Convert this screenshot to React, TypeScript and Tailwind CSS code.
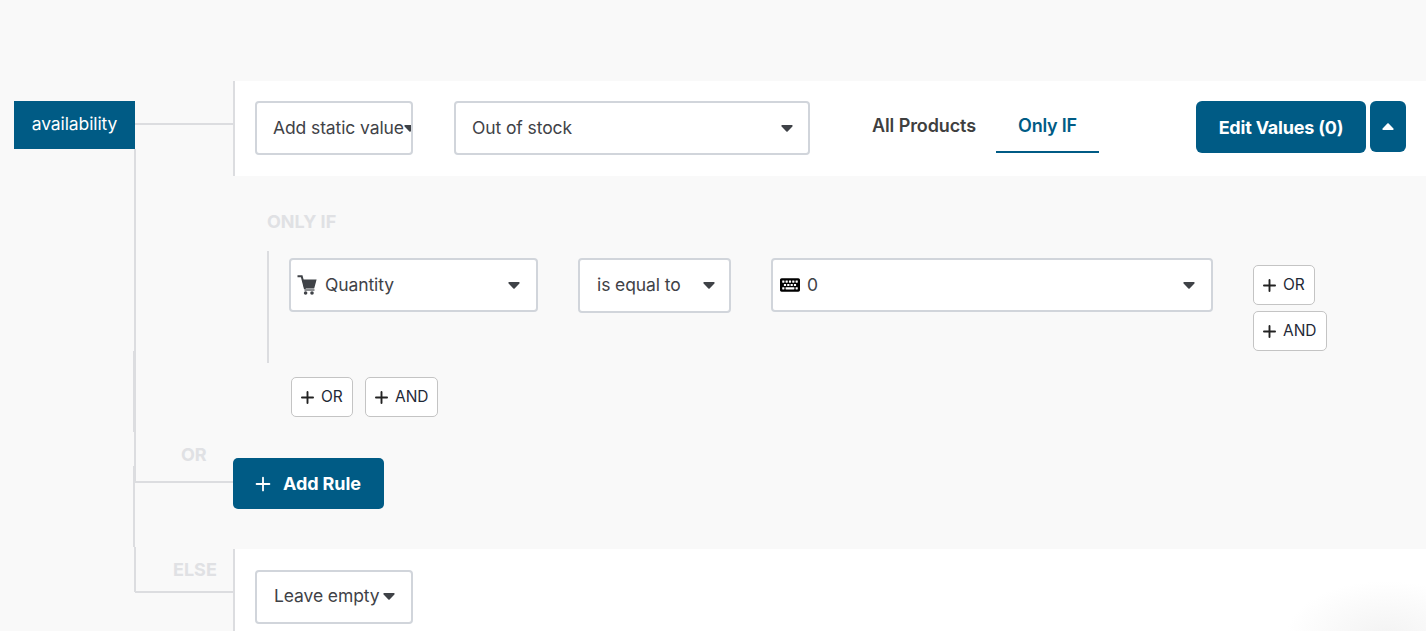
import React from 'react';
import { Plus } from 'lucide-react';
import { FaKeyboard } from 'react-icons/fa';

const Caret: React.FC<{ className?: string; up?: boolean }> = ({ className = '', up }) => (
  <svg viewBox="0 0 13 8" className={`w-[12px] h-[7px] shrink-0 ${up ? 'rotate-180' : ''} ${className}`} fill="currentColor">
    <path d="M1 0h11c.9 0 1.3 1 .7 1.6L7.2 7.4c-.4.4-1 .4-1.4 0L.3 1.6C-.3 1 .1 0 1 0z" />
  </svg>
);

const CartIcon = () => (
  <svg viewBox="0 0 20 20" className="w-[20px] h-[20px] shrink-0 mr-[8px] text-[#3f4247]" fill="currentColor">
    <path d="M0.5 1.2h4.2L8 14" fill="none" stroke="currentColor" strokeWidth="2" />
    <path d="M5.2 4.6h14.4L17.2 13.4H7.2z" />
    <path d="M7.5 15h10" stroke="currentColor" strokeWidth="1.2" />
    <circle cx="8.6" cy="18" r="1.8" />
    <circle cx="15" cy="18" r="1.8" />
  </svg>
);

const Select: React.FC<{ className: string; children: React.ReactNode }> = ({ className, children }) => (
  <div className={`flex items-center bg-white border-2 border-[#d1d5db] rounded-[4px] text-[#3f4247] text-[17.5px] font-['Inter',sans-serif] tracking-[-0.1px] ${className}`}>
    {children}
  </div>
);

const SmallBtn: React.FC<{ label: string; className: string }> = ({ label, className }) => (
  <button className={`flex items-center h-[40px] pl-[6px] bg-white border border-[#c4c4c4] rounded-[5px] text-[#1f2937] text-[15.5px] font-['Inter',sans-serif] ${className}`}>
    <Plus className="w-[19px] h-[19px] mr-[4px] text-[#222]" strokeWidth={2.4} />
    {label}
  </button>
);

const SideLabel: React.FC<{ className: string; children: React.ReactNode }> = ({ className, children }) => (
  <span className={`absolute text-[#e0e1e4] text-[18px] leading-[20px] font-bold font-['Inter',sans-serif] ${className}`}>{children}</span>
);

export default function App() {
  return (
    <div className="relative flex w-[1426px] h-[631px] overflow-hidden bg-[#f9f9f9] font-['Inter',sans-serif]">
      {/* left tree */}
      <div className="w-[233px] shrink-0 pt-[101px] pl-[14px]">
        <div className="flex items-center justify-center w-[121px] h-[48px] pb-[2px] bg-[#005b85] text-white text-[17.5px] tracking-[-0.1px]">
          availability
        </div>
      </div>
      {/* connector lines, the trunk is one pixel off in places */}
      <div className="absolute left-[135px] top-[123px] w-[98px] h-[2px] bg-[#dcdde0]" />
      <div className="absolute left-[134px] top-[149px] w-[2px] h-[334px] bg-[#dcdde0]" />
      <div className="absolute left-[133px] top-[351px] w-[1px] h-[81px] bg-[#dcdde0]" />
      <div className="absolute left-[133px] top-[466px] w-[2px] h-[81px] bg-[#dcdde0]" />
      <div className="absolute left-[134px] top-[547px] w-[2px] h-[45px] bg-[#dcdde0]" />
      <div className="absolute left-[135px] top-[481px] w-[98px] h-[2px] bg-[#dcdde0]" />
      <div className="absolute left-[135px] top-[591px] w-[98px] h-[2px] bg-[#dcdde0]" />
      <SideLabel className="left-[181px] top-[445px]">OR</SideLabel>
      <SideLabel className="left-[173px] top-[560px]">ELSE</SideLabel>

      {/* right column */}
      <div className="flex-1 pt-[81px]">
        <div className="flex items-start h-[95px] pt-[20px] pl-[20px] bg-white border-l-2 border-[#dcdde0]">
          <Select className="w-[158px] h-[54px] pl-[16px] pt-[1px] overflow-hidden">
            <span className="whitespace-nowrap">Add static value</span>
            <Caret className="text-[#3f4247] mt-[-1px]" />
          </Select>
          <Select className="w-[356px] h-[54px] ml-[41px] pl-[16px] pr-[15px] pt-[1px] justify-between">
            <span>Out of stock</span>
            <Caret />
          </Select>
          <div className="flex ml-[62px] h-[52px] text-[18px] font-semibold">
            <span className="pt-[11px] w-[124px] text-[#3f3f3f] tracking-[-0.1px]">All Products</span>
            <span className="flex justify-center pt-[11px] w-[103px] border-b-2 border-[#005b85] text-[#005b85] tracking-[-0.2px]">Only IF</span>
          </div>
          <button className="w-[170px] h-[52px] ml-[97px] pt-[1px] bg-[#005b85] rounded-[6px] text-white text-[18px] font-bold tracking-[-0.2px]">
            Edit Values (0)
          </button>
          <button className="flex items-center justify-center w-[36px] h-[51px] ml-[4px] pr-[1px] bg-[#005b85] rounded-[6px] text-white">
            <Caret up />
          </button>
        </div>

        <div className="h-[373px] pt-[36px]">
          <div className="ml-[34px] text-[#e0e1e4] text-[18px] leading-[20px] font-bold">ONLY IF</div>
          <div className="flex items-start ml-[34px] mt-[19px] h-[112px] pt-[7px] pl-[20px] border-l-2 border-[#dcdde0]">
            <Select className="w-[249px] h-[54px] pl-[6px] pr-[16px]">
              <CartIcon />
              <span className="flex-1 pt-[1px]">Quantity</span>
              <Caret />
            </Select>
            <Select className="w-[153px] h-[55px] ml-[40px] pl-[17px] pr-[14px] justify-between">
              <span>is equal to</span>
              <Caret />
            </Select>
            <Select className="w-[442px] h-[54px] ml-[40px] pl-[7px] pr-[16px]">
              <FaKeyboard className="w-[20px] h-[18px] mr-[7px] text-black" />
              <span className="flex-1 pt-[1px]">0</span>
              <Caret />
            </Select>
            <div className="flex flex-col items-start gap-[6px] ml-[40px] mt-[7px]">
              <SmallBtn label="OR" className="w-[62px]" />
              <SmallBtn label="AND" className="w-[74px]" />
            </div>
          </div>
          <div className="flex gap-[12px] ml-[58px] mt-[14px]">
            <SmallBtn label="OR" className="w-[62px]" />
            <SmallBtn label="AND" className="w-[73px]" />
          </div>
          <button className="flex items-center w-[151px] h-[51px] mt-[41px] pl-[19px] bg-[#005b85] rounded-[5px] text-white text-[18px] font-bold tracking-[-0.1px]">
            <Plus className="w-[22px] h-[22px] mr-[9px]" strokeWidth={2} />
            Add Rule
          </button>
        </div>

        <div className="h-[82px] pt-[21px] pl-[20px] bg-white border-l-2 border-[#dcdde0]">
          <Select className="w-[158px] h-[54px] pl-[17px] pb-[1px]">
            <span className="whitespace-nowrap">Leave empty</span>
            <Caret className="ml-[3px]" />
          </Select>
        </div>
      </div>

      {/* faint shadow in the corner */}
      <div className="absolute right-[-60px] bottom-[-60px] w-[200px] h-[110px] rounded-full bg-[radial-gradient(closest-side,#f3f3f3,#ffffff00)]" />
    </div>
  );
}
